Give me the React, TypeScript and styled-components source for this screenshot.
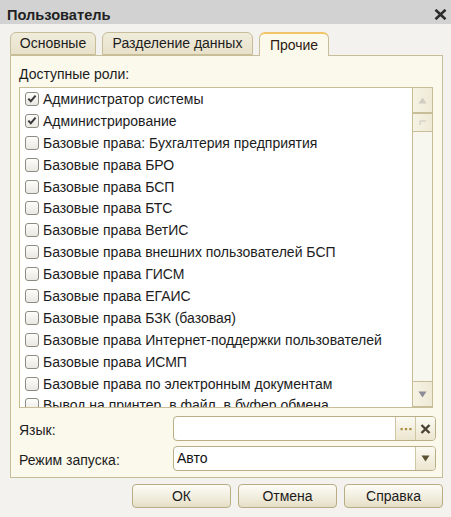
import React from "react";
import styled, { createGlobalStyle } from "styled-components";

const Global = createGlobalStyle`
  html, body { margin: 0; padding: 0; }
  body {
    font-family: "Liberation Sans", Arial, sans-serif;
    font-size: 14px;
    color: #1c1c1c;
    background: #d9d9d9;
  }
`;

const Window = styled.div`
  width: 451px;
  height: 517px;
  display: flex;
  flex-direction: column;
  background: #d9d9d9;
  overflow: hidden;
`;

const TitleBar = styled.div`
  height: 24px;
  flex: none;
  display: flex;
  align-items: center;
  justify-content: space-between;
  padding: 0 4px 0 7px;
  background: #d2d2d2;
`;

const Title = styled.div`
  font-weight: bold;
  font-size: 14.6px;
  color: #222;
  margin-top: 5px;
`;

const CloseIcon = styled.svg`
  width: 13px;
  height: 11px;
  margin-top: 5px;
`;

const Body = styled.div`
  flex: none;
  height: 489px;
  background: #f3f2ee;
  padding: 8px 8px 0 10px;
  display: flex;
  flex-direction: column;
  border-bottom: 1px solid #c9c6b8;
`;

const TabStrip = styled.div`
  height: 23px;
  display: flex;
  align-items: flex-end;
  gap: 6px;
  position: relative;
  z-index: 1;
`;

const Tab = styled.div<{ $active?: boolean; $w: number }>`
  width: ${(p) => p.$w}px;
  box-sizing: border-box;
  height: ${(p) => (p.$active ? 24 : 23)}px;
  margin-bottom: ${(p) => (p.$active ? -1 : 0)}px;
  display: flex;
  align-items: center;
  justify-content: center;
  padding-bottom: 1px;
  border: 1px solid #c7bd98;
  border-bottom: ${(p) => (p.$active ? "none" : "1px solid #c7bd98")};
  border-top: ${(p) => (p.$active ? "2px solid #f1c66a" : "1px solid #c7bd98")};
  border-radius: 6px 6px 0 0;
  background: ${(p) =>
    p.$active ? "#fbf9ec" : "linear-gradient(#f0ecdb, #e8e2cb)"};
  color: ${(p) => (p.$active ? "#2a1a10" : "#1c1c1c")};
  font-size: 14px;
`;

const Panel = styled.div`
  height: 423px;
  box-sizing: border-box;
  border: 1px solid #c7bd98;
  background: #fbf9ec;
  padding: 10px 6px 0 8px;
  display: flex;
  flex-direction: column;
`;

const Label = styled.div`
  line-height: 16px;
  height: 16px;
`;

const ListBox = styled.div`
  margin-top: 5px;
  margin-right: 3px;
  height: 321px;
  box-sizing: border-box;
  border: 1px solid #c7bd98;
  background: #fff;
  display: flex;
`;

const Rows = styled.div`
  flex: 1;
  overflow: hidden;
`;

const Row = styled.div`
  height: 21.9px;
  display: flex;
  align-items: center;
  padding-left: 5px;
  gap: 4px;
  white-space: nowrap;
`;

const Box = styled.div`
  width: 12px;
  height: 12px;
  flex: none;
  border: 1px solid #8e8c80;
  border-radius: 3px;
  background: linear-gradient(#fdfdfb, #e9e8e2);
  display: flex;
  align-items: center;
  justify-content: center;
`;

const ScrollBar = styled.div`
  width: 19px;
  flex: none;
  border-left: 1px solid #c7bd98;
  background: #f7f6ef;
  display: flex;
  flex-direction: column;
`;

const ScrollBtn = styled.div<{ $h: number }>`
  height: ${(p) => p.$h}px;
  box-sizing: border-box;
  border-bottom: 1px solid #c7bd98;
  border-top: 1px solid #c7bd98;
  background: linear-gradient(90deg, #f6f3e4, #efead6);
  display: flex;
  align-items: center;
  justify-content: center;
  &:first-child { border-top: none; }
`;

const Track = styled.div`
  flex: 1;
`;

const FieldRow = styled.div<{ $gap: number }>`
  display: flex;
  align-items: center;
  height: 25px;
  margin-top: ${(p) => p.$gap}px;
`;

const FieldLabel = styled.div`
  width: 154px;
  flex: none;
  padding-top: 2px;
`;

const Input = styled.div`
  flex: 1;
  height: 25px;
  box-sizing: border-box;
  border: 1px solid #b9ae86;
  border-radius: 4px;
  background: #fff;
  display: flex;
  overflow: hidden;
`;

const InputText = styled.div`
  flex: 1;
  padding: 3px 0 0 3px;
  font-size: 14px;
  color: #111;
`;

const InBtn = styled.div`
  width: 19px;
  flex: none;
  border-left: 1px solid #cfc6a4;
  background: linear-gradient(#fbfaf3, #ece6cf);
  display: flex;
  align-items: center;
  justify-content: center;
`;

const Footer = styled.div`
  display: flex;
  justify-content: flex-end;
  gap: 7px;
  margin-top: 6px;
`;

const Button = styled.div`
  width: 99px;
  height: 24px;
  box-sizing: border-box;
  border: 1px solid #b8ad84;
  border-radius: 4px;
  background: linear-gradient(#fdfcf6, #f1edde 55%, #e6dfc6);
  display: flex;
  align-items: center;
  justify-content: center;
  font-size: 14px;
  color: #1c1c1c;
`;

const Check = () => (
  <svg width="10" height="9" viewBox="0 0 10 9">
    <path d="M1.3 4.6 L3.8 7.2 L8.6 1.6" fill="none" stroke="#3a3a3a" strokeWidth="2" />
  </svg>
);

const Tri = ({ up, color }: { up?: boolean; color: string }) => (
  <svg width="9" height="7" viewBox="0 0 9 7">
    <path d={up ? "M4.5 0.5 L8.5 6.5 L0.5 6.5 Z" : "M0.5 0.5 L8.5 0.5 L4.5 6.5 Z"} fill={color} />
  </svg>
);

const roles: [string, boolean][] = [
  ["Администратор системы", true],
  ["Администрирование", true],
  ["Базовые права: Бухгалтерия предприятия", false],
  ["Базовые права БРО", false],
  ["Базовые права БСП", false],
  ["Базовые права БТС", false],
  ["Базовые права ВетИС", false],
  ["Базовые права внешних пользователей БСП", false],
  ["Базовые права ГИСМ", false],
  ["Базовые права ЕГАИС", false],
  ["Базовые права БЗК (базовая)", false],
  ["Базовые права Интернет-поддержки пользователей", false],
  ["Базовые права ИСМП", false],
  ["Базовые права по электронным документам", false],
  ["Вывод на принтер, в файл, в буфер обмена", false],
];

export default function App() {
  return (
    <>
      <Global />
      <Window>
        <TitleBar>
          <Title>Пользователь</Title>
          <CloseIcon viewBox="0 0 13 11">
            <path d="M1.5 0.8 L11.5 10.2 M11.5 0.8 L1.5 10.2" stroke="#2b2b2b" strokeWidth="2.6" />
          </CloseIcon>
        </TitleBar>
        <Body>
          <TabStrip>
            <Tab $w={86}>Основные</Tab>
            <Tab $w={151}>Разделение данных</Tab>
            <Tab $w={70} $active>Прочие</Tab>
          </TabStrip>
          <Panel>
            <Label>Доступные роли:</Label>
            <ListBox>
              <Rows>
                {roles.map(([name, on]) => (
                  <Row key={name}>
                    <Box>{on && <Check />}</Box>
                    <span>{name}</span>
                  </Row>
                ))}
              </Rows>
              <ScrollBar>
                <ScrollBtn $h={25}>
                  <Tri up color="#cfcdc2" />
                </ScrollBtn>
                <ScrollBtn $h={19}>
                  <svg width="8" height="6" viewBox="0 0 8 6">
                    <path d="M1 5 V2 Q1 1 2 1 H7" fill="none" stroke="#dcdacd" strokeWidth="2" />
                  </svg>
                </ScrollBtn>
                <Track />
                <ScrollBtn $h={26}>
                  <Tri color="#8c8b96" />
                </ScrollBtn>
              </ScrollBar>
            </ListBox>
            <FieldRow $gap={8}>
              <FieldLabel>Язык:</FieldLabel>
              <Input>
                <InputText />
                <InBtn>
                  <svg width="12" height="4" viewBox="0 0 12 4">
                    <rect x="0.5" y="1" width="2.2" height="2.2" fill="#a8893e" />
                    <rect x="4.9" y="1" width="2.2" height="2.2" fill="#a8893e" />
                    <rect x="9.3" y="1" width="2.2" height="2.2" fill="#a8893e" />
                  </svg>
                </InBtn>
                <InBtn>
                  <svg width="11" height="10" viewBox="0 0 11 10">
                    <path d="M1.5 1 L9.5 9 M9.5 1 L1.5 9" stroke="#4a4232" strokeWidth="2.4" />
                  </svg>
                </InBtn>
              </Input>
            </FieldRow>
            <FieldRow $gap={5}>
              <FieldLabel>Режим запуска:</FieldLabel>
              <Input>
                <InputText>Авто</InputText>
                <InBtn>
                  <Tri color="#5c5032" />
                </InBtn>
              </Input>
            </FieldRow>
          </Panel>
          <Footer>
            <Button>ОК</Button>
            <Button>Отмена</Button>
            <Button>Справка</Button>
          </Footer>
        </Body>
      </Window>
    </>
  );
}
